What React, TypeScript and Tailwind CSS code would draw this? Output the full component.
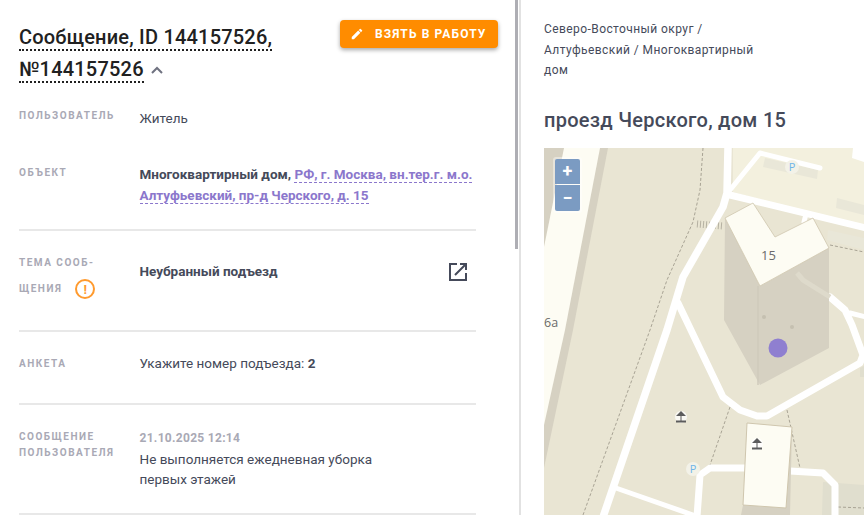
import React from "react";

const Umbrella = ({ x, y }: { x: number; y: number }) => (
  <g transform={`translate(${x} ${y})`}>
    <circle cx="0" cy="0" r="6" fill="#fff" opacity="0.75" />
    <path d="M0 -6 L5 -1 L-5 -1 Z" fill="#5c5c5c" />
    <rect x="-0.5" y="-1" width="1" height="5" fill="#5c5c5c" />
    <rect x="-5" y="3.5" width="10" height="2" fill="#5c5c5c" />
  </g>
);

const MapDrawing = () => (
  <svg className="block w-full h-full" viewBox="544 148 320 367" fill="none">
    <rect x="544" y="148" width="320" height="367" fill="#e9e5d3" />
    <polygon points="608,148 573,330 544,468 544,148" fill="#d6d1c2" />
    <polygon points="564,148 600,148 565,330 544,425 544,247" fill="#fdfcf3" />
    <polygon points="733,148 864,148 864,227 733,192" fill="#f3f0de" />
    <polygon points="853,148 864,148 864,162 852,158" fill="#ffffff" />
    <polygon points="765,158 818,170 817,179 763,167" fill="#e9e7d8" />
    <polygon points="837,198 864,205 864,215 836,208" fill="#e9e7d8" />
    <polygon points="828,230 864,238 864,250 827,240" fill="#e9e7d8" />
    <polygon points="823,482 864,485 864,515 822,515" fill="#e0dece" />
    <polygon points="860,368 864,366 864,377 860,377" fill="#e0dece" />

    <g stroke="#a8a394" strokeWidth="1" strokeDasharray="3 2">
      <polyline points="703,148 700,190 693,222 667,280 650,330 583,515" />
      <polyline points="830,245 864,252" />
      <polyline points="730,407 710,465" />
      <polyline points="787,410 800,468" />
      <polyline points="838,507 864,508" />
    </g>
    <polyline points="697,224 723,226" stroke="#b5b1a2" strokeWidth="7" strokeDasharray="1 2" />

    <g stroke="#ffffff" strokeLinejoin="round" strokeLinecap="round">
      <polyline points="728,148 727,193 723,207 683,277 667,330 602,520" strokeWidth="7.5" />
      <polyline points="730,195 866,228" strokeWidth="7" />
      <polyline points="730,190 760,153 820,168" strokeWidth="5" />
      <polyline points="806,214 804,222" strokeWidth="5" />
      <polyline points="678,303 723,397 740,410 757,416 767,416 860,363 863,355 852,325 845,310 830,297" strokeWidth="7" />
      <polyline points="850,313 866,317" strokeWidth="5" />
      <polyline points="613,487 693,515" strokeWidth="5" />
      <polyline points="697,517 700,475 710,468 748,468" strokeWidth="7" />
      <polyline points="790,471 823,473 835,485 835,517" strokeWidth="7" />
    </g>

    <polygon points="725,218 724,320 760,385 829,348 829,248 760,286" fill="#d6d1c2" />
    <line x1="758" y1="286" x2="758" y2="385" stroke="#cfcabb" strokeWidth="1.5" />
    <polyline points="797,273 803,280 830,297" stroke="#dedacb" strokeWidth="5" />
    <circle cx="764" cy="317" r="2" fill="#c5c0b0" />
    <circle cx="792" cy="327" r="2" fill="#c5c0b0" />
    <polygon
      points="725,218 753,203 775,237 813,218 829,248 760,286"
      fill="#fdfcf3"
      stroke="#cfc6ae"
      strokeWidth="0.8"
    />
    <text x="761" y="260" fontSize="13" fill="#6b6b6b" fontFamily="'Open Sans', sans-serif">
      15
    </text>

    <polygon points="743,505 741,515 790,515 792,427 786,508" fill="#d6d1c2" />
    <polygon points="747,423 792,427 786,508 743,505" fill="#fdfcf3" stroke="#cfc6ae" strokeWidth="1" />

    <circle cx="778" cy="348" r="9.5" fill="#8f7fd0" />

    <circle cx="792" cy="167" r="7" fill="#f3f2e8" />
    <text x="792" y="171" fontSize="11" fill="#6fb5e8" textAnchor="middle" fontFamily="'Open Sans', sans-serif">
      P
    </text>
    <circle cx="693" cy="469" r="7" fill="#f3f2e8" />
    <text x="693" y="473" fontSize="11" fill="#6fb5e8" textAnchor="middle" fontFamily="'Open Sans', sans-serif">
      P
    </text>
    <Umbrella x={681} y={417} />
    <Umbrella x={757} y={444} />
    <text x="544" y="327" fontSize="12.5" fill="#6b6b6b" fontFamily="'Open Sans', sans-serif">
      6а
    </text>
  </svg>
);

const Label = ({ children, className = "" }: { children: React.ReactNode; className?: string }) => (
  <div className={`w-[120.5px] shrink-0 text-[10px] font-bold leading-[16px] tracking-[1.5px] text-[#a9a9b5] ${className}`}>
    {children}
  </div>
);

export default function App() {
  return (
    <div
      className="relative flex h-[515px] w-[864px] overflow-hidden bg-white text-[13.5px] text-[#454a5a]"
      style={{ fontFamily: "Roboto, sans-serif" }}
    >
      <div className="h-full w-[521px] shrink-0 border-r-2 border-[#e2e2e2] pl-[19px] pr-[43px]">
        <div className="flex items-start justify-between pt-[21px]">
          <div className="w-[290px] text-[20px] font-medium leading-[32px] tracking-[0.2px] text-[#212121]">
            <span className="border-b-2 border-dotted border-[#212121]">Сообщение, ID 144157526,</span>
            <br />
            <span className="border-b-2 border-dotted border-[#212121]">№144157526</span>
            <svg className="ml-[5px] inline-block align-[-2px] text-[#6f7280]" width="16" height="16" viewBox="0 0 16 16">
              <path d="M3 11 L8 6 L13 11" stroke="currentColor" strokeWidth="2" fill="none" />
            </svg>
          </div>
          <button className="mr-[-22px] mt-[-1px] flex h-[28px] w-[158px] shrink-0 items-center rounded-[4px] bg-[#ff8c00] pl-[10px] text-[12px] font-bold tracking-[1.1px] text-white shadow-[0_2px_4px_rgba(0,0,0,0.35)]">
            <svg width="14" height="14" viewBox="0 0 24 24" fill="currentColor" className="mr-[11px]">
              <path d="M3 17.25V21h3.75L17.81 9.94l-3.75-3.75L3 17.25zM20.71 7.04a1 1 0 0 0 0-1.41l-2.34-2.34a1 1 0 0 0-1.41 0l-1.83 1.83 3.75 3.75 1.83-1.83z" />
            </svg>
            ВЗЯТЬ В РАБОТУ
          </button>
        </div>

        <div className="flex pt-[23px]">
          <Label>ПОЛЬЗОВАТЕЛЬ</Label>
          <div className="leading-[21px]">Житель</div>
        </div>

        <div className="mt-[35px] flex border-b-2 border-[#e8e8e8] pb-[23px]">
          <Label className="pt-[1px]">ОБЪЕКТ</Label>
          <div className="w-[337px] font-medium leading-[21px]">
            <span className="font-bold">Многоквартирный дом, </span>
            <span className="border-b border-dashed border-[#8b77cc] text-[#8b77cc] font-bold">РФ, г. Москва, вн.тер.г. м.о.</span>
            <br />
            <span className="border-b border-dashed border-[#8b77cc] text-[#8b77cc] font-bold">Алтуфьевский, пр-д Черского, д. 15</span>
          </div>
        </div>

        <div className="flex h-[101px] border-b-2 border-[#e8e8e8] pt-[19px]">
          <Label>
            <div className="leading-[26px]">ТЕМА СООБ-</div>
            <div className="flex items-center leading-[26px]">
              ЩЕНИЯ
              <span className="ml-[13px] flex h-[20px] w-[20px] items-center justify-center rounded-full border-2 border-[#ff9a2e] text-[13px] font-bold leading-none tracking-normal text-[#ff9a2e]">!</span>
            </div>
          </Label>
          <div className="flex-1 pt-[11px] font-bold leading-[21px]">Неубранный подъезд</div>
          <svg className="mr-[9px] mt-[13px] text-[#454a5a]" width="18" height="18" viewBox="0 0 18 18" fill="none" stroke="currentColor" strokeWidth="2">
            <path d="M8 1 H1 V17 H17 V10" />
            <path d="M11 1 H17 V7 M17 1 L6 12" />
          </svg>
        </div>

        <div className="flex h-[73px] border-b-2 border-[#e8e8e8] pt-[21px]">
          <Label className="pt-[3px]">АНКЕТА</Label>
          <div className="leading-[21px]">Укажите номер подъезда: <b>2</b></div>
        </div>

        <div className="flex border-b-2 border-[#e8e8e8] pt-[24px] pb-[23px]">
          <Label>
            СООБЩЕНИЕ<br />ПОЛЬЗОВАТЕЛЯ
          </Label>
          <div className="mt-[-1px] w-[240px] leading-[20.5px]">
            <div className="text-[12px] font-bold tracking-[0.3px] text-[#a9a9b5]">21.10.2025 12:14</div>
            Не выполняется ежедневная уборка первых этажей
          </div>
        </div>
      </div>

      <div className="absolute left-[515px] top-0 h-[249px] w-[3px] bg-[#aeaeb4]" />

      <div className="min-w-0 flex-1 pl-[23px]">
        <div className="w-[220px] pt-[19px] text-[12px] leading-[20.5px] tracking-[0.42px]">
          Северо-Восточный округ / Алтуфьевский / Многоквартирный дом
        </div>
        <div className="mt-[25px] text-[20px] font-medium leading-[28px] tracking-[0.27px]">проезд Черского, дом 15</div>
        <div className="relative mt-[14px] h-[367px] w-[320px]">
          <MapDrawing />
          <div className="absolute left-[9px] top-[9px] w-[29px] rounded-[3px] bg-white/40 p-[2px]">
            <button className="flex h-[25px] w-[25px] items-center justify-center rounded-t-[2px] bg-[#7b9bc2] text-[18px] font-bold leading-none text-white">+</button>
            <button className="mt-[1px] flex h-[26px] w-[25px] items-center justify-center rounded-b-[2px] bg-[#7b9bc2] text-[18px] font-bold leading-none text-white">−</button>
          </div>
        </div>
      </div>
    </div>
  );
}
